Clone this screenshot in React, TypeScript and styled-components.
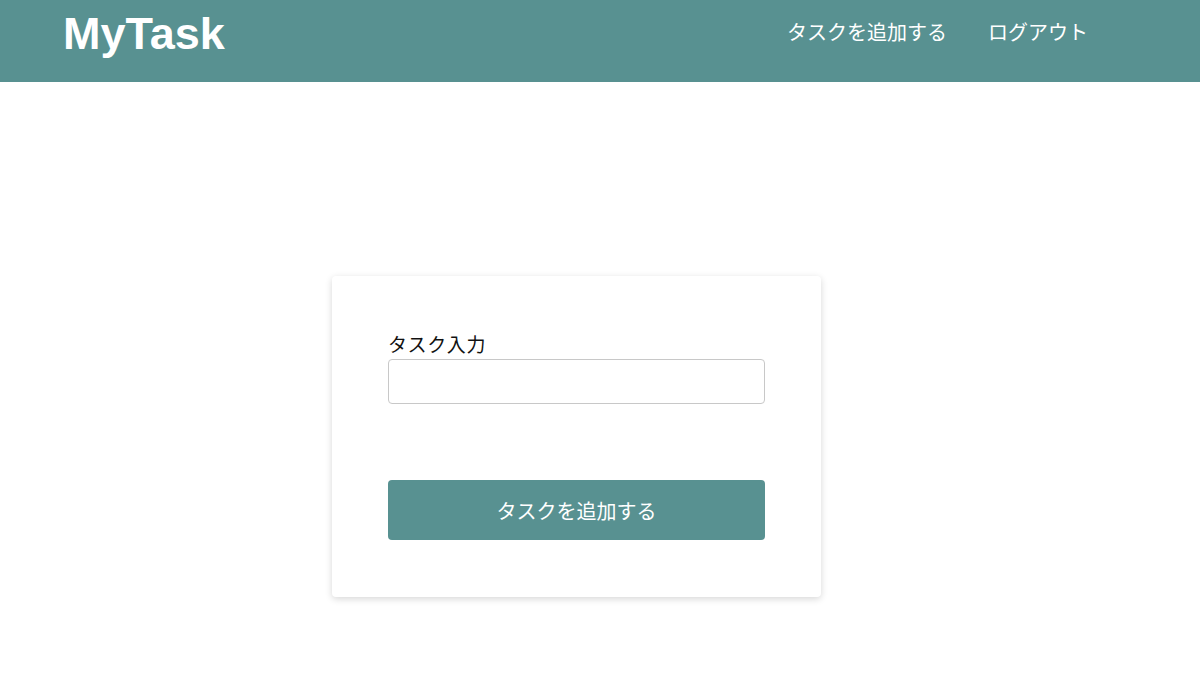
import React, { useState } from 'react'
import styled, { createGlobalStyle } from 'styled-components';

const GlobalStyle = createGlobalStyle`
  * {
    box-sizing: border-box;
  }
  body {
    margin: 0;
    background-color: #fff;
    font-family: "Liberation Sans", "Noto Sans CJK JP", sans-serif;
    color: #111;
  }
`

const Header = styled.header`
  height: 82px;
  background-color: #589191;
  display: flex;
  align-items: center;
  justify-content: space-between;
  padding: 0 112px 0 63px;
`

const Logo = styled.h1`
  margin: 0;
  font-family: "Liberation Sans", "Noto Sans CJK JP", sans-serif;
  font-size: 45px;
  font-weight: 700;
  letter-spacing: 0;
  color: #fff;
  line-height: 1;
  margin-top: -16px;
`

const Nav = styled.nav`
  display: flex;
  gap: 41px;
  margin-top: -19px;
`

const NavLink = styled.a`
  font-family: "Noto Sans CJK JP", sans-serif;
  font-size: 20px;
  color: #fff;
  text-decoration: none;
  cursor: pointer;
`

const Main = styled.main`
  display: flex;
  padding: 194px 0 40px 332px;
`

const Card = styled.form`
  width: 489px;
  padding: 52px 56px 57px;
  background-color: #fff;
  border-radius: 4px;
  box-shadow: 0 2px 7px rgba(0, 0, 0, 0.16);
  display: flex;
  flex-direction: column;
`

const Label = styled.label`
  font-family: "Noto Sans CJK JP", sans-serif;
  font-size: 19px;
  line-height: 31px;
  color: #111;
  letter-spacing: 0.6px;
`

const Input = styled.input`
  height: 45px;
  width: 100%;
  border: 1px solid #c8c8c8;
  border-radius: 4px;
  padding: 0 12px;
  font-size: 16px;
  outline: none;
`

const SubmitButton = styled.button`
  margin-top: 76px;
  height: 60px;
  width: 100%;
  border: none;
  border-radius: 4px;
  background-color: #589191;
  color: #fff;
  font-family: "Noto Sans CJK JP", sans-serif;
  font-size: 20px;
  cursor: pointer;
`

function App() {
  const [task, setTask] = useState('');

  return (
    <>
      <GlobalStyle />
      <Header>
        <Logo>MyTask</Logo>
        <Nav>
          <NavLink>タスクを追加する</NavLink>
          <NavLink>ログアウト</NavLink>
        </Nav>
      </Header>
      <Main>
        <Card onSubmit={(e) => e.preventDefault()}>
          <Label htmlFor="task">タスク入力</Label>
          <Input id="task" value={task} onChange={(e) => setTask(e.target.value)} />
          <SubmitButton type="submit">タスクを追加する</SubmitButton>
        </Card>
      </Main>
    </>
  )
}

export default App;
